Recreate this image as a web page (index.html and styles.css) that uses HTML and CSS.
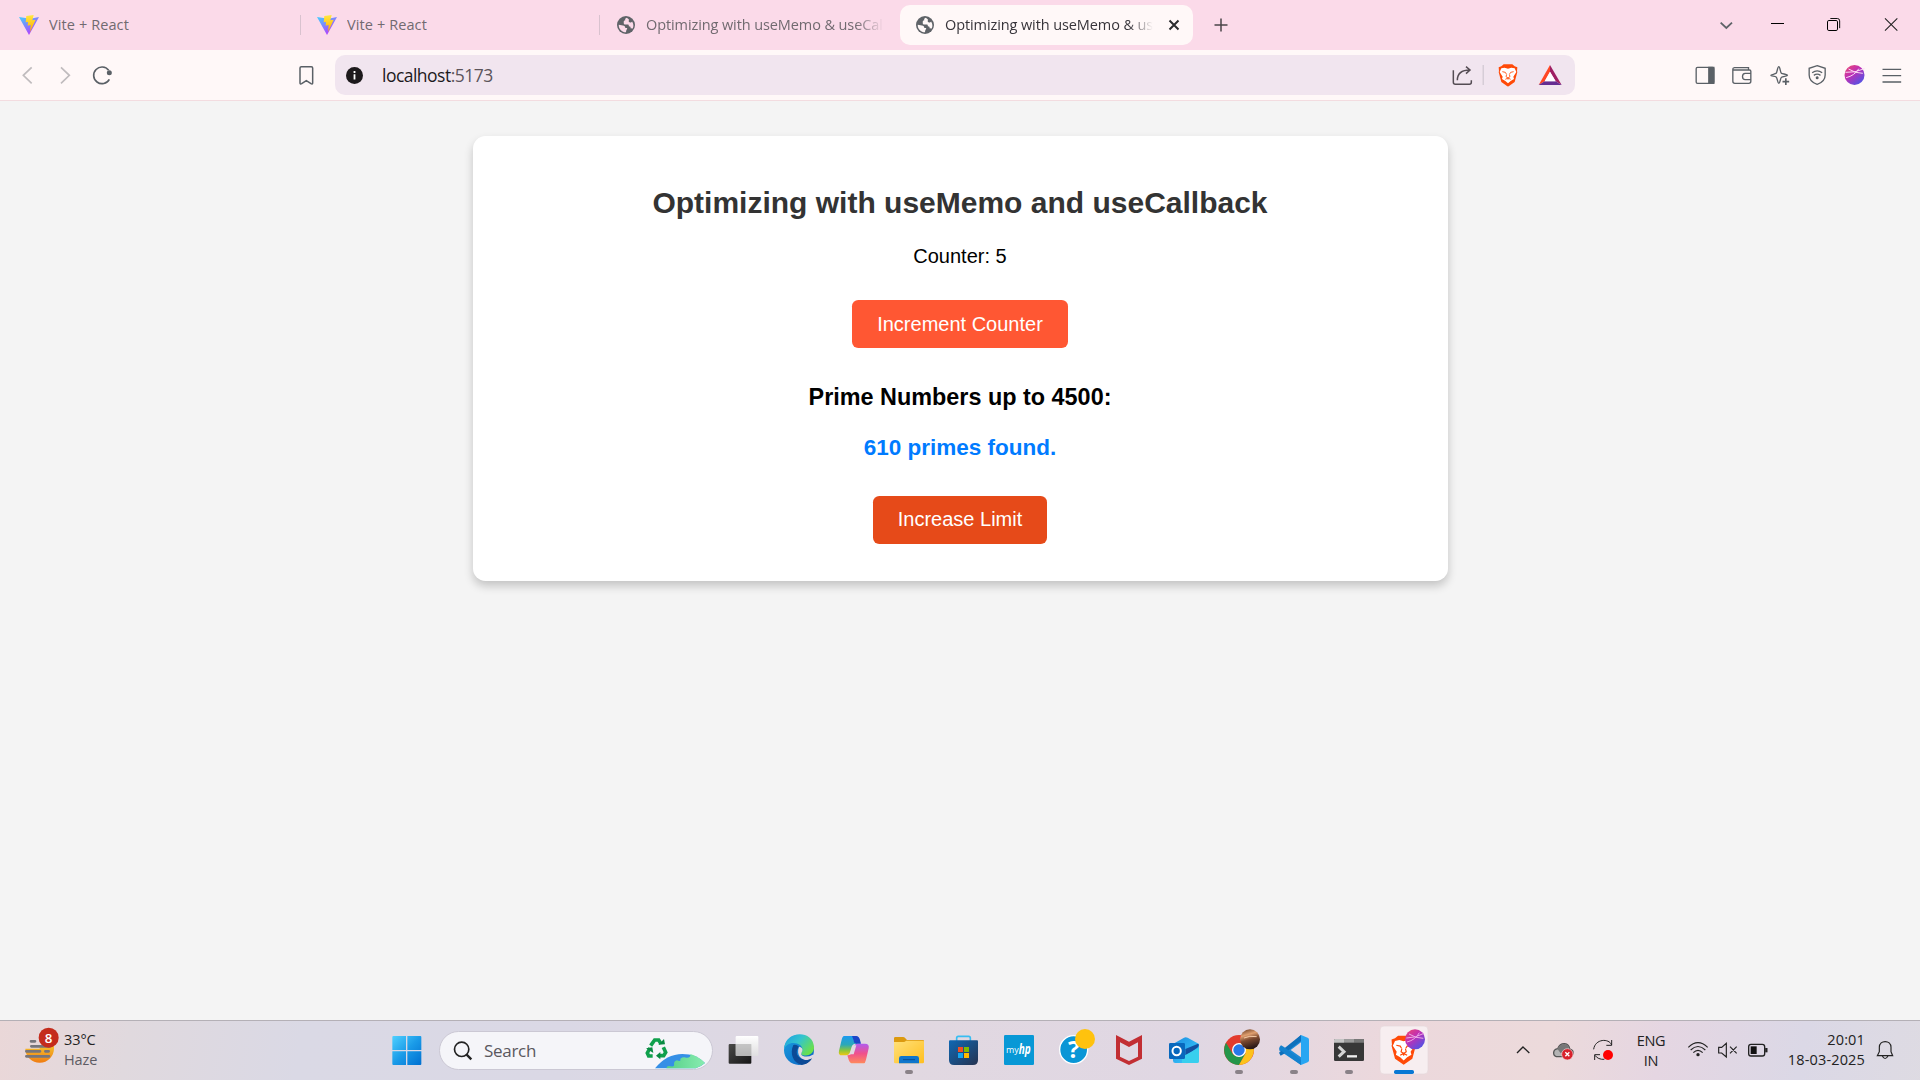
FILE: index.html
```html
<!DOCTYPE html>
<html lang="en">
<head>
<meta charset="utf-8">
<title>Optimizing with useMemo &amp; useCallback</title>
<link rel="stylesheet" href="styles.css">
</head>
<body>
<svg class="defs" width="0" height="0" aria-hidden="true">
  <defs>
    <linearGradient id="viteA" x1="0" y1="0" x2=".7" y2="1"><stop offset="0" stop-color="#41d1ff"/><stop offset="1" stop-color="#bd34fe"/></linearGradient>
    <linearGradient id="viteB" x1="0" y1="0" x2="0" y2="1"><stop offset="0" stop-color="#ffea40"/><stop offset="1" stop-color="#ffa800"/></linearGradient>
    <linearGradient id="orb" x1="0" y1="0" x2=".8" y2="1"><stop offset="0" stop-color="#f04a6a"/><stop offset=".45" stop-color="#c02fb4"/><stop offset="1" stop-color="#4a55e8"/></linearGradient>
    <linearGradient id="win" x1="0" y1="0" x2="1" y2="1"><stop offset="0" stop-color="#4fd0ff"/><stop offset=".5" stop-color="#1a9be8"/><stop offset="1" stop-color="#006fd0"/></linearGradient>
    <linearGradient id="sun" x1="0" y1="0" x2="0" y2="1"><stop offset="0" stop-color="#f5c02c"/><stop offset="1" stop-color="#f07c12"/></linearGradient>
    <linearGradient id="edgeTop" x1="0" y1="0" x2="1" y2=".6"><stop offset="0" stop-color="#1b9de2"/><stop offset=".5" stop-color="#33c4cf"/><stop offset="1" stop-color="#6be04a"/></linearGradient>
    <linearGradient id="edgeLow" x1="0" y1="0" x2="1" y2="1"><stop offset="0" stop-color="#1aa0e0"/><stop offset="1" stop-color="#0b5fc0"/></linearGradient>
    <linearGradient id="copA" x1="0" y1="0" x2="0" y2="1"><stop offset="0" stop-color="#1c9af0"/><stop offset=".45" stop-color="#2ba8b8"/><stop offset=".75" stop-color="#8cc63a"/><stop offset="1" stop-color="#f2c811"/></linearGradient>
    <linearGradient id="copB" x1="0" y1="0" x2="0" y2="1"><stop offset="0" stop-color="#b05cf0"/><stop offset=".5" stop-color="#f0508c"/><stop offset="1" stop-color="#ff8a5c"/></linearGradient>
    <linearGradient id="folder" x1="0" y1="0" x2="1" y2="1"><stop offset="0" stop-color="#ffe07a"/><stop offset="1" stop-color="#ffbf1f"/></linearGradient>
    <linearGradient id="store" x1="0" y1="0" x2="1" y2="1"><stop offset="0" stop-color="#0f68b4"/><stop offset="1" stop-color="#263350"/></linearGradient>
    <linearGradient id="outl" x1="0" y1="0" x2="1" y2="1"><stop offset="0" stop-color="#1a8ae0"/><stop offset="1" stop-color="#3fd4ff"/></linearGradient>
    <linearGradient id="dark" x1="0" y1="0" x2="1" y2="1"><stop offset="0" stop-color="#4a4a48"/><stop offset="1" stop-color="#161616"/></linearGradient>
    <linearGradient id="glass" x1="0" y1="0" x2="0" y2="1"><stop offset="0" stop-color="#fff"/><stop offset="1" stop-color="#e0e0e0" stop-opacity=".85"/></linearGradient>
    <linearGradient id="avatar" x1="0" y1="0" x2=".3" y2="1"><stop offset="0" stop-color="#5c3018"/><stop offset=".35" stop-color="#e0a070"/><stop offset=".6" stop-color="#7c4a30"/><stop offset="1" stop-color="#2c1a18"/></linearGradient>
    <linearGradient id="earth" x1="0" y1="0" x2="1" y2="0"><stop offset="0" stop-color="#56d088"/><stop offset="1" stop-color="#88ecb0"/></linearGradient>
    <symbol id="vite" viewBox="0 0 60 60">
      <path d="M0 6 30 60 60 6 34 11Z" fill="url(#viteA)"/>
      <path d="M22 3 44 0 40 16 50 14 33 51 35 30 26 32 27 21 20 22Z" fill="url(#viteB)"/>
    </symbol>
    <symbol id="globe" viewBox="0 0 24 24">
      <circle cx="12" cy="12" r="12" fill="#5f6368"/>
      <path d="M13 2.2c-2 .6-2.400 1.900-2 3.300-1.300.1-2 .8-2 2v2.200c0 1.200.9 1.700 2.100 1.700h3.200c1.200 0 1.500.8 1.500 2.200 2.100.1 2.700 1.100 2.200 2.700l3 .4a10 10 0 0 0-.9-9.500c-.8 1.700-3.500 2-4.300.4C15 6 16.600 5.500 15.600 4.300 14.800 3.500 14 3 13 2.200ZM2.300 11.500l5.600 1.300c2 .5 3.200 1.100 3.200 3.100l2.500.1c0 2.200-1.600 2.500-1.600 5.700C6.500 21.700 2 17 2.300 11.500Z" fill="currentColor"/>
    </symbol>
    <symbol id="lion" viewBox="0 0 60 68">
      <path d="M17 1h26l7 6 8 3-1 12 1 2-8 30-20 14L10 54 2 24l1-2L2 10l8-3Z" fill="#ff4a08"/>
      <path d="M10 13l10-2 10 3 10-3 10 2 5 11-9 14 2 7-10 6-8 7-8-7-10-6 2-7L5 24Z" fill="#fff"/>
      <path d="M13 23l9 2 3 5M47 23l-9 2-3 5M26 31l-2 7 6 4 6-4-2-7M22 46l8-4 8 4M30 42v5" fill="none" stroke="#ff4a08" stroke-width="2.600"/>
    </symbol>
  </defs>
</svg>

<header class="tabs">
  <div class="tab tab-first"><svg class="fav" width="20" height="20"><use href="#vite"/></svg><span class="title">Vite + React</span></div>
  <div class="tab tab-second"><svg class="fav" width="20" height="20"><use href="#vite"/></svg><span class="title">Vite + React</span></div>
  <div class="tab tab-third"><svg class="globe" width="18" height="18"><use href="#globe"/></svg><span class="title fade">Optimizing with useMemo &amp; useCallback</span></div>
  <div class="tab tab-active"><svg class="globe" width="18" height="18"><use href="#globe"/></svg><span class="title fade">Optimizing with useMemo &amp; useCallback</span>
    <svg class="close" width="12" height="12" viewBox="0 0 12 12"><path d="M1.500 1.500l9 9M10.500 1.500l-9 9" stroke="#2b2b2e" stroke-width="2"/></svg></div>
  <svg class="new-tab" width="14" height="14" viewBox="0 0 14 14"><path d="M7 .5v13M.5 7h13" stroke="#4a4448" stroke-width="1.500"/></svg>
  <svg class="window-controls" width="220" height="50" viewBox="900 0 660 150" fill="none">
    <path d="M962 68l17 16 17-16" stroke="#5f6368" stroke-width="5.500"/>
    <path d="M1113 70.500h39" stroke="#000" stroke-width="3"/>
    <rect x="1282.500" y="61.500" width="30" height="30" rx="4" stroke="#000" stroke-width="3"/>
    <path d="M1291 55.500h21q7 0 7 7v22" stroke="#111" stroke-width="3"/>
    <path d="M1455 55l37 37M1492 55l-37 37" stroke="#222" stroke-width="3.200"/>
  </svg>
</header>

<nav class="toolbar">
  <svg class="nav-buttons" width="110" height="50" viewBox="30 150 330 150" fill="none" stroke-width="5">
    <path d="M95 202 70 226l25 24M183 202l25 24-25 24" stroke="#c0bcbe"/>
    <path d="M328 238a25 25 0 1 1-2-27" stroke="#5a6066"/>
    <circle cx="328" cy="218" r="7.500" fill="#5a6066"/>
  </svg>
  <svg class="bookmark" width="37" height="50" viewBox="864 150 111 150" fill="none"><path d="M900 204q0-4 4-4h30q4 0 4 4v44q0 6-5 3l-14-9-14 9q-5 3-5-3Z" stroke="#5a6066" stroke-width="4.500"/></svg>
  <div class="address">
    <svg width="17" height="17" viewBox="0 0 17 17"><circle cx="8.500" cy="8.500" r="8.500" fill="#1d191c"/><path d="M8.500 7.300v5.200M8.500 4v2" stroke="#fff" stroke-width="1.800"/></svg>
    <span class="url">localhost<span class="port">:5173</span></span>
    <svg class="address-icons" width="125" height="40" viewBox="150 165 375 120" fill="none">
      <path d="M160 211v36q0 6 6 6h42q6 0 6-6v-6M172 241c0-19 12-31 38-31M198 200l12 10-12 11" stroke="#544c53" stroke-width="4.500"/>
      <path d="M249.500 195v60" stroke="#c9c1ca" stroke-width="3"/>
      <use href="#lion" x="294" y="192" width="60" height="68"/>
      <path d="M450 195 416 255l18-11 16-29Z" fill="#ff4724"/><path d="M450 195 485 255l-18-11-17-29Z" fill="#9e1f63"/><path d="M416 255h69l-18-11h-33Z" fill="#662d91"/><path d="M450 215l17 29h-33Z" fill="#fff"/>
    </svg>
  </div>
  <svg class="tools" width="225" height="50" viewBox="859.500 150 675 150" fill="none" stroke="#5a6066" stroke-width="4">
    <rect x="890" y="202" width="53" height="48" rx="4"/><path d="M928 202h15v48h-15Z" fill="#5a6066"/>
    <path d="M1000 208v36q0 6 6 6h42q6 0 6-6v-30q0-4-4-4h-46q-4 0-4-3t5-4h42v7M1054 220h-17q-8 0-8 9.500t8 9.500h17"/>
    <path d="M1138 200c4 0 4 18 8 20s18 3 18 6-14 3-18 6-4 18-8 18-4-16-8-19-16-2-16-5 13-3 16-6 4-20 8-20Z"/><path d="M1159 235v20M1149 245h20" stroke-width="5"/>
    <path d="M1253 197l24 8v20c0 14-12 24-24 28-12-4-24-14-24-28v-20Z"/><path d="M1238 218q15-11 30 0M1243 226q10-7 20 0"/><circle cx="1253" cy="233" r="2.500" fill="#5a6066"/>
    <circle cx="1365" cy="225" r="30" fill="url(#orb)" stroke="none"/><path d="M1338 217q28 2 57-11M1340 233q25-6 38-27M1347 207q20 13 43 13" stroke="#fbd8f4" stroke-width="3"/>
    <path d="M1449 208h56M1449 227h56M1449 246h56" stroke-width="4"/>
  </svg>
</nav>

<main class="page">
  <section class="card">
    <h2>Optimizing with useMemo and useCallback</h2>
    <p>Counter: 5</p>
    <button>Increment Counter</button>
    <h3>Prime Numbers up to 4500:</h3>
    <p class="result">610 primes found.</p>
    <button class="hovered">Increase Limit</button>
  </section>
</main>

<footer class="taskbar">
  <div class="weather">
    <svg width="38" height="59" viewBox="66 33 114 177" fill="none">
      <path d="M76 116h43V106h43v9a43 43 0 0 1-86 1Z" fill="url(#sun)"/>
      <path d="M93 94h12M94 109h56M79 124h41M136 124h10M79 139h68" stroke="#77757b" stroke-width="8" stroke-linecap="round"/>
      <circle cx="146" cy="83" r="30" fill="#c42b1c"/><text x="146" y="98" text-anchor="middle" class="badge-text">8</text>
    </svg>
    <div class="weather-text"><span>33°C</span><span class="muted">Haze</span></div>
  </div>
  <svg class="start" width="30" height="59" viewBox="1178 33 90 177"><path d="M1182 78h38v42h-41V81q0-3 3-3ZM1224 78h39q3 0 3 3v39h-42ZM1179 124h41v41h-38q-3 0-3-3ZM1224 124h42v38q0 3-3 3h-39Z" fill="url(#win)"/></svg>
  <div class="search">
    <svg width="20" height="20" viewBox="0 0 60 60" fill="none" stroke="#222"><circle cx="26" cy="25" r="21.500" stroke-width="5"/><path d="M41 41l14 14" stroke-width="7"/></svg>
    <span>Search</span>
    <svg class="earth" width="61" height="38" viewBox="800 62 183 114">
      <g fill="none" stroke="#10a04c" stroke-width="11"><path d="M817 103l12-17h12l7 11M855 108l7 15-6 10h-13M823 134h-12l-4-9 8-15"/></g>
      <path d="M840 100l20-1-3-16ZM846 122v22l-13-11ZM803 111l19-3 3 17Z" fill="#0a8a42"/>
      <path d="M830 171q35-43 82-43 42 0 68 27-12 11-28 16Z" fill="#358fe6"/>
      <path d="M864 171q2-10 13-6 13 2 10-7 0-9 9-11 13 5 10-5 8-6 18-3 14 1 12-11 25 7 44 27-12 11-28 16Z" fill="url(#earth)"/>
    </svg>
  </div>
  <div class="apps">
    <svg viewBox="1009 33 165 177"><path d="M1050 102h62q3 0 3 3v53q0 3-3 3h-62q-3 0-3-3v-53q0-3 3-3Z" fill="url(#dark)"/><rect x="1068" y="78" width="68" height="60" rx="3" fill="url(#glass)"/><path d="M1068 102h47v36h-47Z" fill="#aaa" opacity=".55"/></svg>
    <svg viewBox="3 33 165 177">
      <circle cx="87" cy="120" r="45" fill="url(#edgeLow)"/>
      <path d="M42 118C44 60 130 58 132 112c0 20-17 27-32 24-10-3-6-8-3-14 3-14-12-23-27-23-13 0-24 8-28 19Z" fill="url(#edgeTop)"/>
      <path d="M70 105c-12 26 0 55 25 59 13-1 25-8 31-19-12 6-31 5-39-4-10-8-8-21 0-31q-8-8-17-5Z" fill="#0c4a96"/>
      <path d="M87 110q13 2 10 13c-3 7-6 12 2 15q14 5 29-4l6 2-7 9c-17 14-53-1-40-35Z" fill="#e1d8e2"/>
      <path d="M79 128c4 22 30 28 47 17-8 12-18 19-31 19-14-6-21-20-16-36Z" fill="#0c4a96"/>
    </svg>
    <svg viewBox="168 33 165 177">
      <path d="M222 78h34q9 0 12 11l3 12h-14q-9 0-12 9l-5 17q-3 9-12 9h-12q-12 0-9-14l8-33q3-11 7-11Z" fill="url(#copA)"/><path d="M246 78h12q9 0 12 12l3 11h-14q-8 0-8-10Z" fill="#1c45c8"/>
      <path d="M282 160h-34q-9 0-12-11l-4-13q10 1 14-9l6-19q3-7 11-7h22q14 0 11 14l-8 34q-3 11-6 11Z" fill="url(#copB)"/><path d="M250 106h9l-8 27h-12Z" fill="#e1d8e2"/>
    </svg>
    <svg viewBox="333 33 165 177"><path d="M372 85q0-4 4-4h23q4 0 7 4l5 5h48q3 0 3 4v15h-90Z" fill="#dc9a10"/><path d="M372 96h29q4 0 7-4h51q3 0 3 3v61q0 4-4 4h-82q-4 0-4-4Z" fill="url(#folder)"/><path d="M387 160v-15q0-7 7-7h46q7 0 7 7v15Z" fill="#0f76cc"/><path d="M399 149h36" stroke="#084e94" stroke-width="3"/><rect class="running" x="405" y="180" width="24" height="12" rx="6"/></svg>
    <svg viewBox="498 33 165 177"><path d="M560 96V84q0-5 5-5h31q5 0 5 5v12" fill="none" stroke="#38bdf2" stroke-width="5"/><path d="M537 94q0-3 3-3h81q3 0 3 3v56q0 15-15 15h-57q-15 0-15-15Z" fill="url(#store)"/><path d="M564 111h15v15h-15Z" fill="#f25022"/><path d="M582 111h15v15h-15Z" fill="#7fba00"/><path d="M564 129h15v15h-15Z" fill="#12a5f0"/><path d="M582 129h15v15h-15Z" fill="#ffb900"/></svg>
    <svg viewBox="663 33 165 177"><rect x="702" y="75" width="90" height="90" rx="4" fill="#0798d6"/><text x="708" y="129" class="my-text" textLength="38" lengthAdjust="spacingAndGlyphs">my</text><text x="746" y="132" class="hp-text" textLength="36" lengthAdjust="spacingAndGlyphs">hp</text></svg>
    <svg viewBox="828 33 165 177"><circle cx="911" cy="119" r="42" fill="#0a96d6" stroke="#fff" stroke-width="4"/><text x="911" y="145" text-anchor="middle" class="help-text">?</text><circle cx="945" cy="87" r="30" fill="#ffc20e"/></svg>
    <svg viewBox="-57 33 165 177"><path d="M-12 75 27 95 66 75v71l-39 19-39-19Zm12 22v43l27 13 27-13V97l-27 14Z" fill="#c22e33"/></svg>
    <svg viewBox="108 33 165 177"><path d="M159 102l33-19q5-3 11 0l34 19v50q0 7-7 7h-64q-7 0-7-7Z" fill="url(#outl)"/><path d="M196 117l38-16q6 3-2 12l-36 25Z" fill="#1450a0"/><path d="M186 140l51-27v40q0 6-6 6h-45Z" fill="#38cfee"/><rect x="147" y="99" width="48" height="48" rx="4" fill="#0868bd"/><circle cx="170" cy="123" r="12.500" fill="none" stroke="#fff" stroke-width="6"/></svg>
    <svg viewBox="273 33 165 177"><circle cx="357" cy="120" r="45" fill="#e33b2e"/><path d="M318 98a45 45 0 0 0 39 67l20-35-20 10q-14 0-20-10Z" fill="#24964a"/><path d="M357 165a45 45 0 0 0 40-65h-40l20 30Z" fill="#fcc21b"/><circle cx="357" cy="120" r="21" fill="#fff"/><circle cx="357" cy="120" r="17" fill="#2878e8"/><circle cx="390" cy="88" r="30" fill="url(#avatar)"/><path d="M372 84q16-8 38-4" fill="none" stroke="#f4c9a4" stroke-width="3"/><rect class="running" x="345" y="180" width="24" height="12" rx="6"/></svg>
    <svg viewBox="438 33 165 177"><path d="M543 75 492 123l-9-7q-5 0-6 5l66 44V142l-31-22 31-23Z" fill="#1e8ad6"/><path d="M478 126q-2 4 4 11l9-5 52-40V75L482 124Z" fill="#0e70bc"/><path d="M477 118q-1-6 6-12l9 5 51 39v15Z" fill="#1582ce"/><path d="M543 75l20 8q4 2 4 6v62q0 4-4 6l-20 8Z" fill="#28a6f2"/><rect class="running" x="510" y="180" width="24" height="12" rx="6"/></svg>
    <svg viewBox="603 33 165 177"><rect x="642" y="87" width="90" height="66" rx="4" fill="#373737"/><path d="M642 98v-8q0-3 3-3h27v11Z" fill="#c4c4c4"/><path d="M672 87h30v11h-30Z" fill="#9a9a9a"/><path d="M702 87h27q3 0 3 3v8h-30Z" fill="#777"/><path d="M656 110l16 15-16 15" fill="none" stroke="#d4d4d4" stroke-width="9"/><path d="M681 139h30" stroke="#eee" stroke-width="7"/><rect class="running" x="675" y="180" width="24" height="12" rx="6"/></svg>
    <svg viewBox="768 33 165 177"><rect x="780" y="48" width="144" height="144" rx="12" fill="#f7eef0" stroke="#e5d8db" stroke-width="2"/><use href="#lion" x="812" y="74" width="78" height="92"/><circle cx="885" cy="88" r="30" fill="url(#orb)"/><path d="M859 84q28 0 53-14M861 96q25-6 37-28M867 72q20 13 43 13" fill="none" stroke="#eda8e6" stroke-width="3"/><rect x="822" y="180" width="60" height="12" rx="5" fill="#0878d4"/></svg>
  </div>
  <svg class="tray-left" width="125" height="59" viewBox="90 33 375 177" fill="none" stroke="#222" stroke-width="4">
    <path d="M111 129l18-18 19 18"/>
    <path d="M229 140q-9-3-8-13 1-9 12-11 7-16 21-15 13 1 15 16 12 4 10 13-2 10-12 10Z" fill="#b4b4b4" stroke="#555"/><path d="M232 116q9-15 22-14 12 2 13 13l-25 15Z" fill="#777" stroke="none"/><circle cx="262" cy="133" r="17" fill="#d8212b" stroke="#f3d5d8" stroke-width="2"/><path d="M256 127l12 12M268 127l-12 12" stroke="#fff"/>
    <path d="M341 118c4-32 46-34 54-13M395 90v16h-16M344 150v-16h16M345 136q9 13 28 12" stroke-width="3"/><circle cx="384" cy="135" r="15" fill="#f00" stroke="none"/>
  </svg>
  <div class="language"><span>ENG</span><span>IN</span></div>
  <svg class="tray-right" width="94" height="59" viewBox="615 33 282 177" fill="none" stroke="#222" stroke-width="3.500">
    <path d="M625 112q29-28 58 0M632 120q22-21 44 0M640 128q14-14 28 0"/><circle cx="654" cy="134" r="5" fill="#222" stroke="none"/>
    <path d="M716 112h9l14-12v41l-14-12h-9ZM750 110l20 20M770 110l-20 20"/>
    <rect x="806" y="103" width="48" height="35" rx="7" stroke-width="4"/><rect x="812" y="109" width="18" height="23" fill="#111" stroke="none"/><path d="M859 114v13" stroke-width="7"/>
  </svg>
  <div class="clock"><span>20:01</span><span>18-03-2025</span></div>
  <svg class="bell" width="18" height="59" viewBox="1188 33 54 177" fill="none" stroke="#222" stroke-width="3.500"><path d="M1192 137l6-12v-13c0-23 35-23 35 0v13l5 12ZM1207 138q8 15 17 0"/></svg>
</footer>
</body>
</html>
```
FILE: styles.css
```css
* { box-sizing: border-box; }
body {
  margin: 0;
  width: 1920px;
  height: 1080px;
  overflow: hidden;
  display: flex;
  flex-direction: column;
  background: #f4f4f4;
  font-family: "Open Sans", "Noto Sans", sans-serif;
}
svg { display: block; flex: none; }
.defs { position: absolute; }

.tabs {
  height: 50px;
  flex: none;
  display: flex;
  align-items: center;
  background: #fbdae9;
  color: #716a70;
  font-size: 14.500px;
}
.tab { display: flex; align-items: center; height: 40px; flex: none; }
.tab .title { line-height: 20px; white-space: nowrap; overflow: hidden; letter-spacing: 0.1px; }
.tab-first { width: 300px; padding-left: 19px; gap: 10px; }
.tab-second { width: 299px; padding-left: 16px; gap: 10px; height: 20px; border-left: 1px solid #d9c2cf; }
.tab-third { width: 301px; padding-left: 17px; gap: 11px; height: 20px; border-left: 1px solid #d9c2cf; }
.tab-active { width: 293px; padding-left: 16px; gap: 11px; background: #fff8f8; border-radius: 10px; color: #37343a; }
.globe { color: #fbdae9; }
.tab-active .globe { color: #fff8f8; }
.tab .fade { width: 238px; letter-spacing: -0.1px; -webkit-mask-image: linear-gradient(to right, #000 88%, transparent); mask-image: linear-gradient(to right, #000 88%, transparent); }
.tab-active .fade { width: 208px; }
.close { margin-left: 4px; }
.new-tab { margin-left: 21px; }
.window-controls { margin-left: auto; }

.toolbar {
  height: 51px;
  flex: none;
  display: flex;
  padding-left: 10px;
  background: #fff8f8;
  border-bottom: 1px solid #f3dce0;
}
.bookmark { margin-left: 168px; }
.address {
  width: 1240px;
  height: 40px;
  margin: 5px 0 0 10px;
  padding-left: 11px;
  display: flex;
  align-items: center;
  border-radius: 10px;
  background: #f1e5ef;
}
.url { margin-left: 19px; font-size: 17.500px; letter-spacing: -0.52px; line-height: 24px; color: #1d191c; }
.port { color: #5c545b; }
.address-icons { margin-left: auto; }
.tools { margin-left: 111px; }

.page { flex: 1; padding-top: 35px; font-family: "Liberation Sans", Arial, sans-serif; }
.card {
  width: 975px;
  height: 445px;
  margin: 0 auto;
  padding: 25px;
  text-align: center;
  background: #fff;
  border-radius: 12.500px;
  box-shadow: 0 5px 10px rgba(0, 0, 0, 0.2);
  color: #000;
  font-size: 20px;
}
.card h2 { margin: 24.900px 0; font-size: 30px; color: #333; }
.card p { margin: 20px 0; }
.card h3 { margin: 23.400px 0; font-size: 23.400px; }
.card .result { margin: 22.500px 0; font-size: 22.500px; font-weight: bold; color: #007bff; }
.card button {
  margin: 12.500px;
  padding: 12.500px 25px;
  border: 0;
  border-radius: 6.250px;
  font: 20px "Liberation Sans", Arial, sans-serif;
  color: #fff;
  background: #ff5733;
}
.card button.hovered { background: #e64a19; }

.taskbar {
  height: 60px;
  flex: none;
  display: flex;
  border-top: 1px solid #b4b0b6;
  background: linear-gradient(100deg, #ead7d8 0, #e0d9de 130px, #dad9e5 300px, #dad8e5 560px, #e1d8e1 900px, #e0d7e3 1180px, #ecd8dc 1380px, #ecdadb 1530px, #e5d6e2 1640px, #dbd8e6 1780px, #dedbe2 1920px);
  color: #222;
  font-size: 14.500px;
}
.weather { display: flex; width: 392px; padding-left: 22px; gap: 4px; }
.weather-text, .language, .clock { display: flex; flex-direction: column; line-height: 20px; padding-top: 9px; }
.weather-text { letter-spacing: -0.1px; }
.muted { color: #5e5b63; letter-spacing: -0.1px; }
.badge-text { font: 600 40px "Open Sans", sans-serif; fill: #fff; }
.search {
  width: 274px;
  height: 39px;
  margin: 10px 3px 0 17px;
  padding: 0 6px 0 13px;
  display: flex;
  align-items: center;
  border: 1px solid #cbc8d4;
  border-radius: 20px;
  background: #f5f5f9;
  color: #5a585e;
  font-size: 17px;
}
.search span { margin-left: 11px; letter-spacing: -0.3px; }
.earth { margin-left: auto; }
.apps { display: flex; }
.apps svg { width: 55px; height: 59px; }
.running { fill: #8a8288; }
.my-text { font: 29px "Open Sans", sans-serif; fill: #fff; }
.hp-text { font: italic 700 44px "Open Sans", sans-serif; fill: #fff; }
.help-text { font: 700 72px "Open Sans", sans-serif; fill: #fff; }
.tray-left { margin-left: 79px; }
.language { width: 32px; align-items: center; padding-top: 10px; letter-spacing: -0.3px; }
.tray-right { margin-left: 18px; }
.clock { width: 86px; align-items: flex-end; letter-spacing: 0.15px; }
.bell { margin-left: 11px; }
```
